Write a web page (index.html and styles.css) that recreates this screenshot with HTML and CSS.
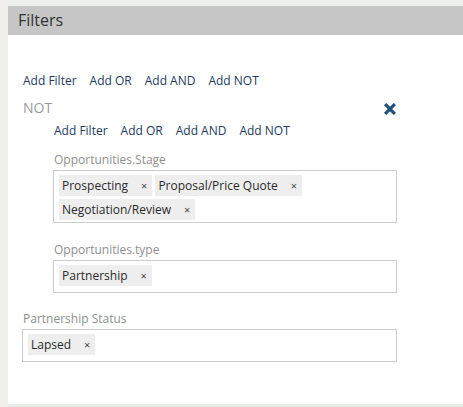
FILE: index.html
```html
<!DOCTYPE html>
<html>
<head>
<meta charset="utf-8">
<link rel="stylesheet" href="styles.css">
</head>
<body>
<div class="panel">
  <div class="panel-header">Filters</div>
  <div class="panel-body">
    <div class="actions">
      <a class="action">Add Filter</a><a class="action">Add OR</a><a class="action">Add AND</a><a class="action">Add NOT</a>
    </div>
    <div class="group">
      <div class="group-head">
        <span class="group-title">NOT</span>
        <svg class="remove" viewBox="0 0 12 12" width="12" height="12"><path d="M2.2 2.2 L9.8 9.8 M9.8 2.2 L2.2 9.8" stroke="#21507c" stroke-width="3.2" stroke-linecap="square"/></svg>
      </div>
      <div class="group-body">
        <div class="actions">
          <a class="action">Add Filter</a><a class="action">Add OR</a><a class="action">Add AND</a><a class="action">Add NOT</a>
        </div>
        <div class="field field-first">
          <div class="field-label">Opportunities.Stage</div>
          <div class="select">
            <span class="tag">Prospecting<span class="x">×</span></span>
            <span class="tag">Proposal/Price Quote<span class="x">×</span></span>
            <span class="tag">Negotiation/Review<span class="x">×</span></span>
          </div>
        </div>
        <div class="field">
          <div class="field-label">Opportunities.type</div>
          <div class="select">
            <span class="tag">Partnership<span class="x">×</span></span>
          </div>
        </div>
      </div>
    </div>
    <div class="field field-outer">
      <div class="field-label">Partnership Status</div>
      <div class="select">
        <span class="tag">Lapsed<span class="x">×</span></span>
      </div>
    </div>
  </div>
</div>
</body>
</html>
```
FILE: styles.css
```css
html, body {
  margin: 0;
  padding: 0;
}
body {
  background: #f0efeb;
  padding-left: 8px;
  font-family: "Open Sans", "Liberation Sans", sans-serif;
  height: 407px;
  box-sizing: border-box;
}
.panel {
  background: #ffffff;
  border-top: 6px solid #edf0ed;
  border-bottom: 3px solid #e8ebe8;
  height: 407px;
  box-sizing: border-box;
}
.panel-header {
  background: #c6c6c6;
  height: 29px;
  line-height: 29px;
  padding-left: 10px;
  font-size: 16px;
  color: #333;
}
.panel-body {
  width: 374px;
  padding: 37px 0 0 15px;
}
.actions {
  display: flex;
  gap: 13px;
  font-size: 12px;
  line-height: 18px;
  height: 18px;
}
.action {
  color: #1d3a5e;
  cursor: pointer;
}
.group {
  margin-top: 7px;
}
.group-head {
  display: flex;
  justify-content: space-between;
  align-items: center;
  height: 22px;
}
.group-title {
  font-size: 14px;
  line-height: 22px;
  color: #999;
}
.remove {
  margin-right: 1px;
  margin-top: 1px;
}
.group-body {
  padding-left: 31px;
}
.group-body .actions {
  margin-top: 3px;
}
.field {
  margin-top: 18px;
}
.field-first {
  margin-top: 11px;
}
.field-outer {
  margin-top: 17px;
}
.field-label {
  font-size: 12px;
  line-height: 17px;
  height: 17px;
  color: #8f8f8f;
  margin-bottom: 2px;
}
.select {
  border: 1px solid #ccc;
  margin-left: -1px;
  padding: 4px 5px 2px;
  min-height: 33px;
  box-sizing: border-box;
  display: flex;
  flex-wrap: wrap;
  align-content: flex-start;
  gap: 3px;
}
.tag {
  background: #eee;
  height: 21px;
  line-height: 21px;
  font-size: 12px;
  color: #2b2b2b;
  padding: 0 5px 0 3px;
  display: inline-flex;
  align-items: center;
}
.tag .x {
  font-size: 11px;
  margin-left: 13px;
  color: #444;
}
```
